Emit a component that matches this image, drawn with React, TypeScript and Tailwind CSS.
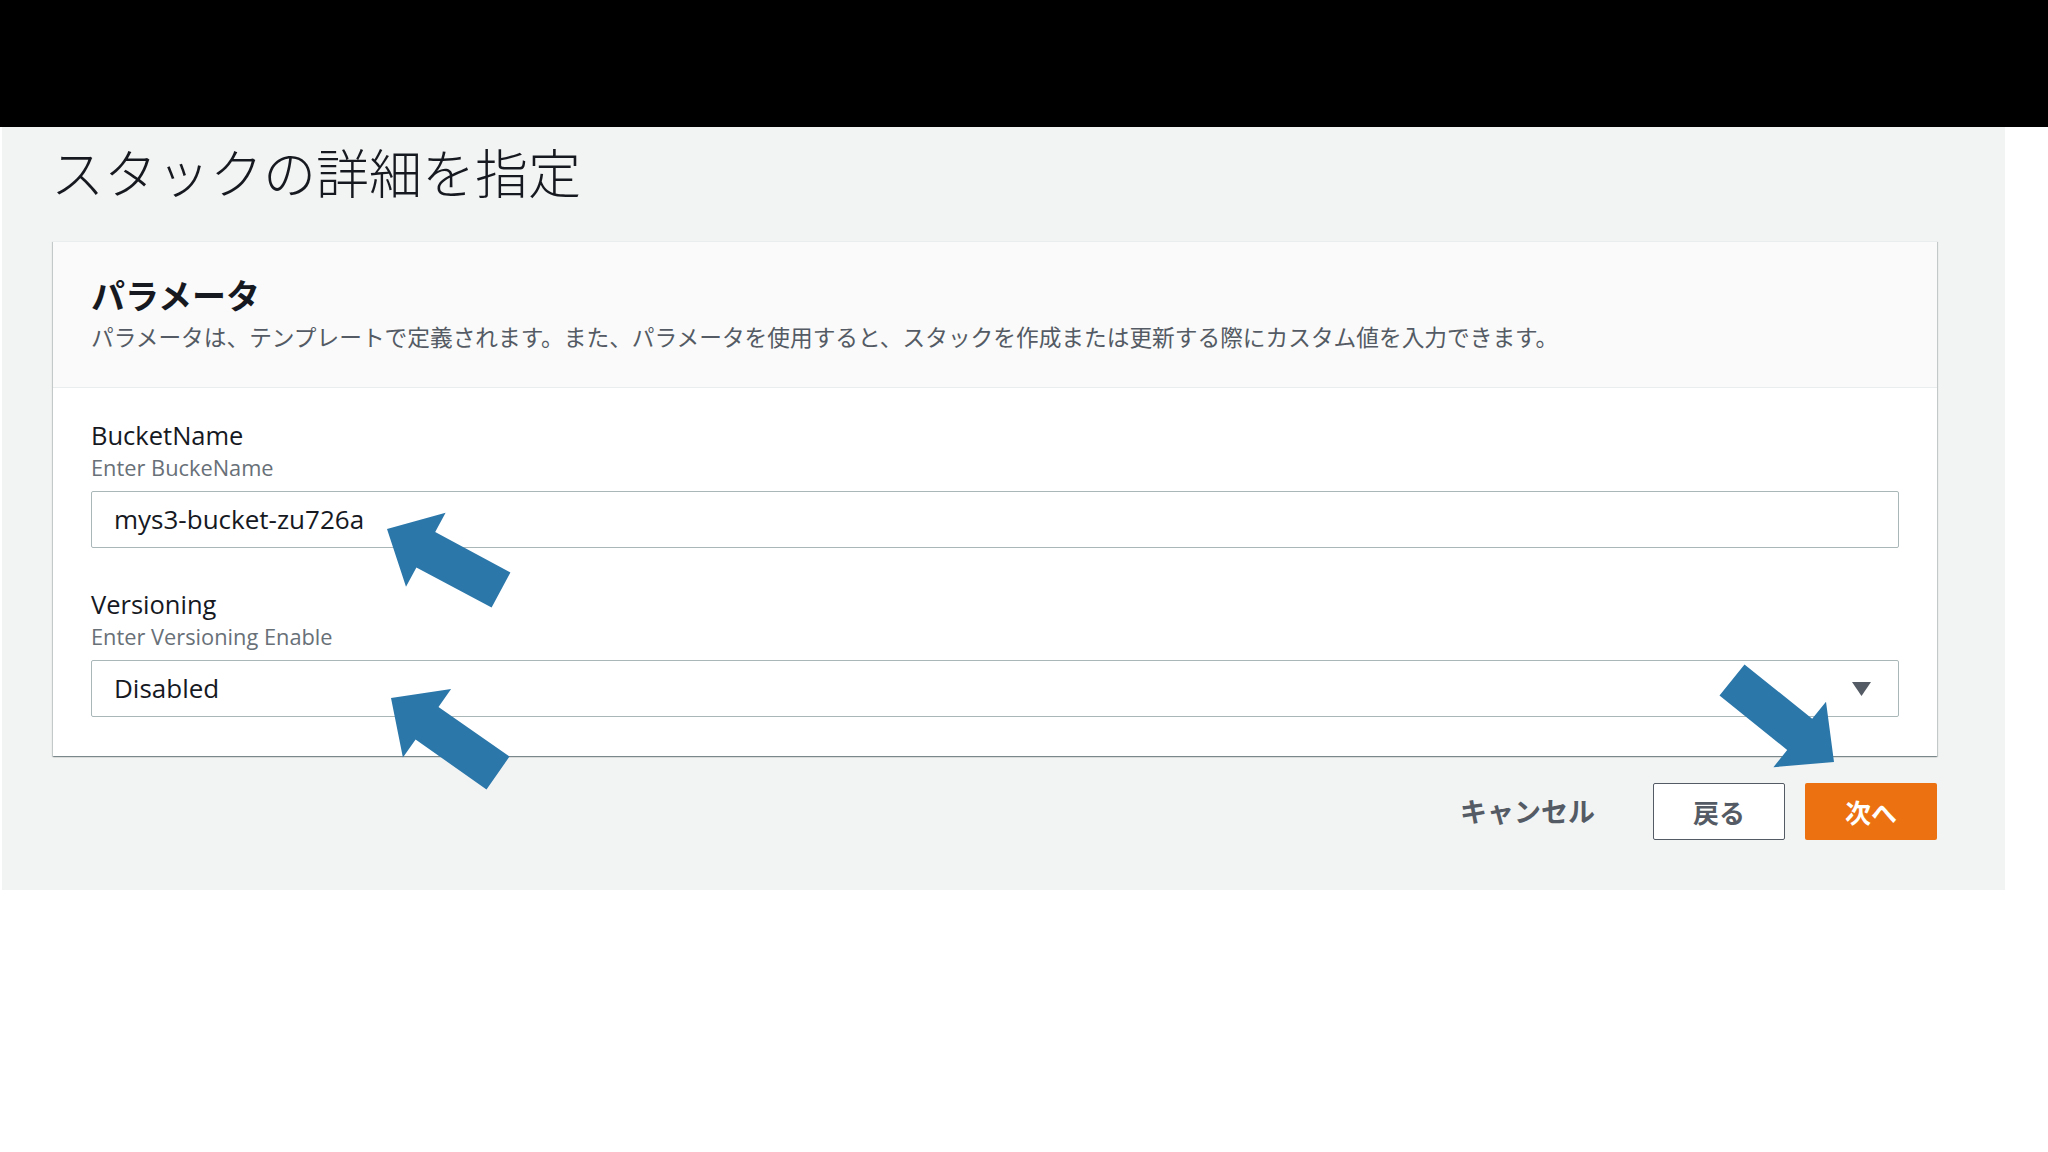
import React from 'react';

type Pt = [number, number];

// block arrow drawn from tail centre to tip
const arrowPoints = (tip: Pt, tail: Pt) => {
  const dx = tip[0] - tail[0];
  const dy = tip[1] - tail[1];
  const len = Math.hypot(dx, dy);
  const ux = dx / len;
  const uy = dy / len;
  const nx = -uy;
  const ny = ux;
  const head = 44;
  const headHalf = 42;
  const shaftHalf = 20;
  const bx = tip[0] - ux * head;
  const by = tip[1] - uy * head;
  const pts: Pt[] = [
    tip,
    [bx + nx * headHalf, by + ny * headHalf],
    [bx + nx * shaftHalf, by + ny * shaftHalf],
    [tail[0] + nx * shaftHalf, tail[1] + ny * shaftHalf],
    [tail[0] - nx * shaftHalf, tail[1] - ny * shaftHalf],
    [bx - nx * shaftHalf, by - ny * shaftHalf],
    [bx - nx * headHalf, by - ny * headHalf],
  ];
  return pts.map(p => `${p[0].toFixed(1)},${p[1].toFixed(1)}`).join(' ');
};

const arrows: { tip: Pt; tail: Pt }[] = [
  { tip: [387, 529], tail: [501, 590] },
  { tip: [391, 698], tail: [498, 773] },
  { tip: [1834, 762], tail: [1732, 680] },
];

const Field: React.FC<{ label: string; hint: string; children: React.ReactNode; className?: string }> = ({
  label,
  hint,
  children,
  className,
}) => (
  <div className={`flex flex-col ${className ?? ''}`}>
    <span className="text-[25.5px] leading-[32px] text-[#16191f]">{label}</span>
    <span className="mt-[3px] text-[21.8px] leading-[28px] text-[#687078]">{hint}</span>
    <div className="mt-[9px]">{children}</div>
  </div>
);

const App: React.FC = () => {
  return (
    <div className="relative w-[2048px] h-[1152px] overflow-hidden bg-white font-['Open_Sans','Noto_Sans_CJK_JP',sans-serif]">
      {/* top black bar */}
      <div className="h-[127px] bg-black" />

      {/* page */}
      <div className="ml-[2px] w-[2003px] h-[763px] bg-[#f2f3f3] pl-[51px] pr-[68px] pt-[13px]">
        <h1 className="-ml-[2px] text-[53px] leading-[62px] font-light text-[#16191f] font-['Noto_Sans_CJK_JP',sans-serif]">
          スタックの詳細を指定
        </h1>

        {/* parameters card */}
        <div className="mt-[39px] w-[1884px] border-t border-[#eaeded] bg-white shadow-[0_1px_1px_0_rgba(0,28,36,0.3),1px_1px_1px_0_rgba(0,28,36,0.15),-1px_1px_1px_0_rgba(0,28,36,0.15)]">
          <div className="bg-[#fafafa] border-b border-[#eaeded] px-[38px] pt-[31px] pb-[35px] font-['Noto_Sans_CJK_JP',sans-serif]">
            <h2 className="text-[34px] leading-[44px] font-bold text-[#16191f]">パラメータ</h2>
            <p className="mt-[5px] text-[22.7px] leading-[30px] text-[#545b64] whitespace-nowrap">
              パラメータは、テンプレートで定義されます。また、パラメータを使用すると、スタックを作成または更新する際にカスタム値を入力できます。
            </p>
          </div>

          <div className="px-[38px] pt-[31px] pb-[39px]">
            <Field label="BucketName" hint="Enter BuckeName">
              <div className="h-[57px] flex items-center border border-[#aab7b8] rounded-[2px] bg-white px-[22px] text-[26px] text-[#16191f]">
                mys3-bucket-zu726a
              </div>
            </Field>

            <Field label="Versioning" hint="Enter Versioning Enable" className="mt-[40px]">
              <div className="h-[57px] flex items-center justify-between border border-[#aab7b8] rounded-[2px] bg-white pl-[22px] pr-[27px] text-[26px] text-[#16191f]">
                <span>Disabled</span>
                <svg width="19" height="14" viewBox="0 0 19 14">
                  <polygon points="0,0 19,0 9.5,14" fill="#545b64" />
                </svg>
              </div>
            </Field>
          </div>
        </div>

        {/* actions */}
        <div className="mt-[27px] w-[1884px] flex items-center justify-end font-['Noto_Sans_CJK_JP',sans-serif]">
          <button className="text-[27px] font-bold text-[#545b64]">キャンセル</button>
          <button className="ml-[58px] w-[132px] h-[57px] border border-[#545b64] rounded-[2px] bg-white text-[26px] font-bold text-[#545b64]">
            戻る
          </button>
          <button className="ml-[20px] w-[132px] h-[57px] rounded-[2px] bg-[#ec7211] text-[26px] font-bold text-white">
            次へ
          </button>
        </div>
      </div>

      {/* annotation arrows */}
      <svg className="absolute left-0 top-0 pointer-events-none" width="2048" height="1152" viewBox="0 0 2048 1152">
        {arrows.map((a, i) => (
          <polygon key={i} points={arrowPoints(a.tip, a.tail)} fill="#2b77aa" />
        ))}
      </svg>
    </div>
  );
};

export default App;
